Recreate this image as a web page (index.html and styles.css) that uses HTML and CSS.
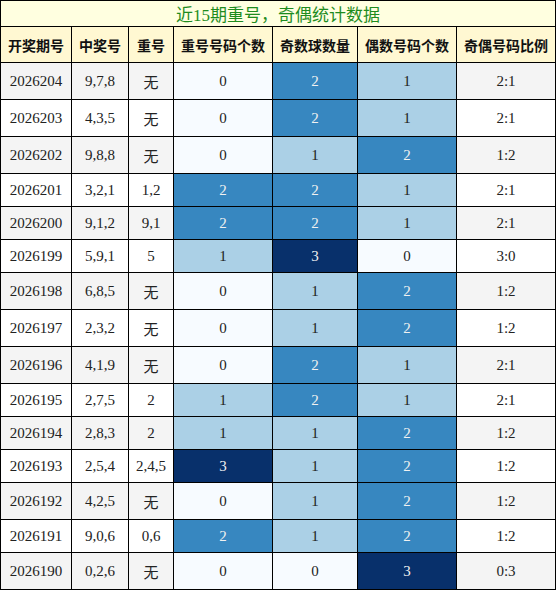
FILE: index.html
```html
<!DOCTYPE html>
<html lang="zh">
<head>
<meta charset="UTF-8">
<meta name="viewport" content="width=device-width, initial-scale=1.0">
<title>近15期重号，奇偶统计数据</title>
<link rel="stylesheet" href="styles.css">
</head>
<body>

<table class="stats">
  <tr>
    <th colspan="7" class="caption-row">近15期重号，奇偶统计数据</th>
  </tr>
  <tr class="head">
    <th>开奖期号</th>
    <th>中奖号</th>
    <th>重号</th>
    <th>重号号码个数</th>
    <th>奇数球数量</th>
    <th>偶数号码个数</th>
    <th>奇偶号码比例</th>
  </tr>

  <tr class="odd">
    <td>2026204</td><td>9,7,8</td><td>无</td>
    <td class="b0">0</td><td class="b2">2</td><td class="b1">1</td><td>2:1</td>
  </tr>
  <tr>
    <td>2026203</td><td>4,3,5</td><td>无</td>
    <td class="b0">0</td><td class="b2">2</td><td class="b1">1</td><td>2:1</td>
  </tr>
  <tr class="odd">
    <td>2026202</td><td>9,8,8</td><td>无</td>
    <td class="b0">0</td><td class="b1">1</td><td class="b2">2</td><td>1:2</td>
  </tr>
  <tr>
    <td>2026201</td><td>3,2,1</td><td>1,2</td>
    <td class="b2">2</td><td class="b2">2</td><td class="b1">1</td><td>2:1</td>
  </tr>
  <tr class="odd">
    <td>2026200</td><td>9,1,2</td><td>9,1</td>
    <td class="b2">2</td><td class="b2">2</td><td class="b1">1</td><td>2:1</td>
  </tr>
  <tr>
    <td>2026199</td><td>5,9,1</td><td>5</td>
    <td class="b1">1</td><td class="b3">3</td><td class="b0">0</td><td>3:0</td>
  </tr>
  <tr class="odd">
    <td>2026198</td><td>6,8,5</td><td>无</td>
    <td class="b0">0</td><td class="b1">1</td><td class="b2">2</td><td>1:2</td>
  </tr>
  <tr>
    <td>2026197</td><td>2,3,2</td><td>无</td>
    <td class="b0">0</td><td class="b1">1</td><td class="b2">2</td><td>1:2</td>
  </tr>
  <tr class="odd">
    <td>2026196</td><td>4,1,9</td><td>无</td>
    <td class="b0">0</td><td class="b2">2</td><td class="b1">1</td><td>2:1</td>
  </tr>
  <tr>
    <td>2026195</td><td>2,7,5</td><td>2</td>
    <td class="b1">1</td><td class="b2">2</td><td class="b1">1</td><td>2:1</td>
  </tr>
  <tr class="odd">
    <td>2026194</td><td>2,8,3</td><td>2</td>
    <td class="b1">1</td><td class="b1">1</td><td class="b2">2</td><td>1:2</td>
  </tr>
  <tr>
    <td>2026193</td><td>2,5,4</td><td>2,4,5</td>
    <td class="b3">3</td><td class="b1">1</td><td class="b2">2</td><td>1:2</td>
  </tr>
  <tr class="odd">
    <td>2026192</td><td>4,2,5</td><td>无</td>
    <td class="b0">0</td><td class="b1">1</td><td class="b2">2</td><td>1:2</td>
  </tr>
  <tr>
    <td>2026191</td><td>9,0,6</td><td>0,6</td>
    <td class="b2">2</td><td class="b1">1</td><td class="b2">2</td><td>1:2</td>
  </tr>
  <tr class="odd">
    <td>2026190</td><td>0,2,6</td><td>无</td>
    <td class="b0">0</td><td class="b0">0</td><td class="b3">3</td><td>0:3</td>
  </tr>
</table>

</body>
</html>
```

FILE: styles.css
```css
body {
  margin: 0;
  background: #fff;
}

.stats {
  width: 556px;
  border-collapse: collapse;
  font-family: "Liberation Serif", "Noto Sans CJK SC", serif;
  font-size: 15px;
  color: #222;
}

.stats th,
.stats td {
  border: 1px solid #000;
  text-align: center;
  padding: 8px 7px 7px;
  white-space: nowrap;
}

/* title row */
.caption-row {
  background: #ffffe0;
  color: #1e8c1e;
  font-size: 17px;
  font-weight: normal;
  padding: 0 !important;
}

.head th {
  background: #fff8d2;
  font-family: "Noto Sans CJK SC", sans-serif;
  font-size: 14px;
  font-weight: bold;
  color: #111;
  padding: 8px 7px 7px;
}

.odd td {
  background: #f4f4f4;
}

/* colour scale for the count columns */
.stats td.b0 { background: #f7fbff; color: #222; }
.stats td.b1 { background: #abd0e6; color: #222; }
.stats td.b2 { background: #3787c0; color: #f1f1f1; }
.stats td.b3 { background: #08306b; color: #f1f1f1; }
```
